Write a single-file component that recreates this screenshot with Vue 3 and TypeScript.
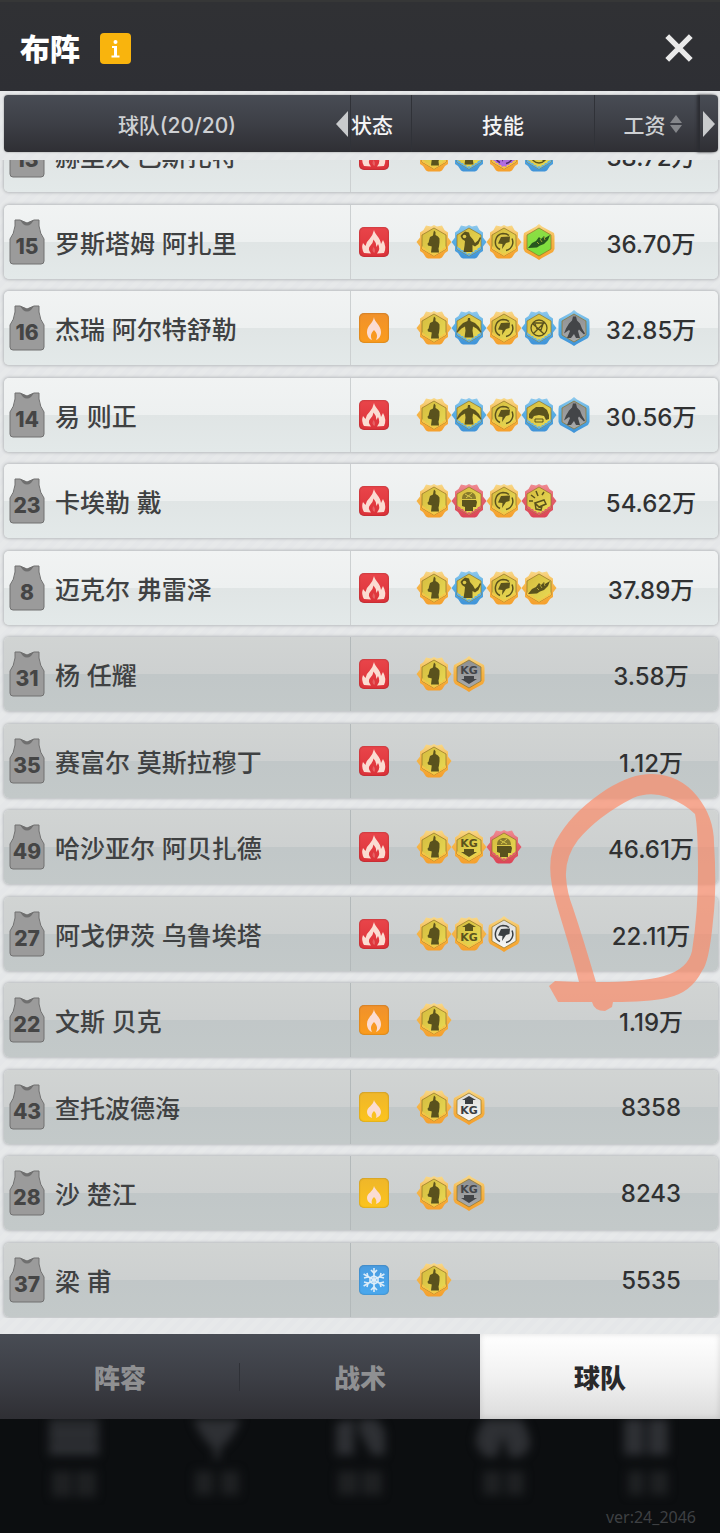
<script setup lang="ts">
type Mood = 'hot' | 'warm' | 'mild' | 'cold'
type Glyph = 'body' | 'throw' | 'bolt' | 'shoe' | 'spread' | 'net' | 'guard' | 'dome' | 'head' | 'whistle' | 'kgdown' | 'kgup'

interface Skill {
  glyph: Glyph
  frame: string
  shape: 'rosette' | 'hex'
  fill: string
}

interface Player {
  no: number
  name: string
  mood: Mood
  skills: Skill[]
  salary: string
  reserve: boolean
}

const skill = (glyph: Glyph, frame = 'gold', shape: Skill['shape'] = 'rosette', fill = 'yellow'): Skill => ({
  glyph,
  frame,
  shape,
  fill,
})

const body = skill('body')
const bolt = skill('bolt')

const players: Player[] = [
  { no: 13, name: '赫里茨 巴斯扎特', mood: 'hot', skills: [body, skill('spread', 'blue'), skill('bolt', 'gold', 'rosette', 'purple'), skill('net', 'blue')], salary: '38.72万', reserve: false },
  { no: 15, name: '罗斯塔姆 阿扎里', mood: 'hot', skills: [body, skill('throw', 'blue'), bolt, skill('shoe', 'gold', 'hex', 'green')], salary: '36.70万', reserve: false },
  { no: 16, name: '杰瑞 阿尔特舒勒', mood: 'warm', skills: [body, skill('spread', 'blue'), bolt, skill('net', 'blue'), skill('guard', 'blue', 'hex', 'gray')], salary: '32.85万', reserve: false },
  { no: 14, name: '易 则正', mood: 'hot', skills: [body, skill('spread', 'blue'), bolt, skill('dome', 'blue'), skill('guard', 'blue', 'hex', 'gray')], salary: '30.56万', reserve: false },
  { no: 23, name: '卡埃勒 戴', mood: 'hot', skills: [body, skill('head', 'red'), bolt, skill('whistle', 'red')], salary: '54.62万', reserve: false },
  { no: 8, name: '迈克尔 弗雷泽', mood: 'hot', skills: [body, skill('throw', 'blue'), bolt, skill('shoe')], salary: '37.89万', reserve: false },
  { no: 31, name: '杨 任耀', mood: 'hot', skills: [body, skill('kgdown', 'gold', 'hex', 'gray')], salary: '3.58万', reserve: true },
  { no: 35, name: '赛富尔 莫斯拉穆丁', mood: 'hot', skills: [body], salary: '1.12万', reserve: true },
  { no: 49, name: '哈沙亚尔 阿贝扎德', mood: 'hot', skills: [body, skill('kgdown'), skill('head', 'red')], salary: '46.61万', reserve: true },
  { no: 27, name: '阿戈伊茨 乌鲁埃塔', mood: 'hot', skills: [body, skill('kgup'), skill('bolt', 'gold', 'hex', 'white')], salary: '22.11万', reserve: true },
  { no: 22, name: '文斯 贝克', mood: 'warm', skills: [body], salary: '1.19万', reserve: true },
  { no: 43, name: '查托波德海', mood: 'mild', skills: [body, skill('kgup', 'gold', 'hex', 'white')], salary: '8358', reserve: true },
  { no: 28, name: '沙 楚江', mood: 'mild', skills: [body, skill('kgdown', 'gold', 'hex', 'gray')], salary: '8243', reserve: true },
  { no: 37, name: '梁 甫', mood: 'cold', skills: [body], salary: '5535', reserve: true },
]

const tabs = ['阵容', '战术', '球队']
const activeTab = '球队'
</script>

<template>
  <div class="page">
    <svg class="defs" width="0" height="0" aria-hidden="true">
      <defs>
        <linearGradient id="frame-gold" x1="0" y1="0" x2="0" y2="1">
          <stop offset="0" stop-color="#f8d98a" /><stop offset=".45" stop-color="#f5b548" /><stop offset="1" stop-color="#f5a02c" />
        </linearGradient>
        <linearGradient id="frame-blue" x1="0" y1="0" x2="0" y2="1">
          <stop offset="0" stop-color="#8fc9ec" /><stop offset=".45" stop-color="#58aee4" /><stop offset="1" stop-color="#3f93d8" />
        </linearGradient>
        <linearGradient id="frame-red" x1="0" y1="0" x2="0" y2="1">
          <stop offset="0" stop-color="#f08d93" /><stop offset=".45" stop-color="#e25f6c" /><stop offset="1" stop-color="#dc4456" />
        </linearGradient>
        <linearGradient id="fill-yellow" x1="0" y1="0" x2="1" y2="1">
          <stop offset="0" stop-color="#d5bb3e" /><stop offset="1" stop-color="#e9dc55" />
        </linearGradient>
        <linearGradient id="fill-gray" x1="0" y1="0" x2="0" y2="1">
          <stop offset="0" stop-color="#8e9092" /><stop offset="1" stop-color="#a9aaab" />
        </linearGradient>
        <linearGradient id="fill-white" x1="0" y1="0" x2="0" y2="1">
          <stop offset="0" stop-color="#dcdcda" /><stop offset="1" stop-color="#f7f7f5" />
        </linearGradient>
        <linearGradient id="fill-green" x1="0" y1="0" x2="0" y2="1">
          <stop offset="0" stop-color="#8fdd45" /><stop offset="1" stop-color="#79e03c" />
        </linearGradient>
        <linearGradient id="fill-purple" x1="0" y1="0" x2="0" y2="1">
          <stop offset="0" stop-color="#a274d0" /><stop offset="1" stop-color="#b56be6" />
        </linearGradient>

        <symbol id="shape-rosette" viewBox="0 0 36 36">
          <path d="M10 1.500 15 2.500 18 1 21 2.500 26 1.500 28.500 6 32 8.500V13.500L35.500 18 32 22.500V27L29 29 26 33.500 24 34.500H12L10 33.500 7 29 4 27V22.500L.5 18 4 13.500V8.500L7.500 6Z" />
        </symbol>
        <symbol id="shape-hex" viewBox="0 0 36 36">
          <path d="M18 0 21 2.500 33 9 33.500 12V25L32 28 21 34 18 36 15 34 4 28 2.500 25V12L3 9 15 2.500Z" />
        </symbol>

        <symbol id="glyph-body" viewBox="0 0 36 36">
          <path d="M18 6.500 19.500 8v3l2.500 1.500 1.500 2v4l-.5 4-.5 2 .5 4h-8l.5-4 .5-4-3.500-1 .5-3 1-3.500 3-1.500.5-3Z" />
          <path d="M11.500 19.500 15 17v3l5-1.500v2.500l-4 1.500-4-1Z" />
        </symbol>
        <symbol id="glyph-throw" viewBox="0 0 36 36">
          <path d="M11 10 14 7.500 18 8.500 19 12 22 15.500 24 19 27 16.500 29 13 30 14 27.500 20 24 22.500 21.500 21 21.500 28H12.500L13.500 22 14 17 11 15 9.500 12Z" />
          <circle cx="13.500" cy="12.500" r="1.800" class="cut" />
        </symbol>
        <symbol id="glyph-spread" viewBox="0 0 36 36">
          <path d="M17 8h2l.5 3 4.500 2 4 4 2.500 5-1 .5-4-4-3.500-2-.5 4 1 7h-9l1-7-.5-4-3.500 2-4 4-1-.5 2.500-5 4-4 4.500-2Z" />
        </symbol>
        <symbol id="glyph-guard" viewBox="0 0 36 36">
          <path d="M17 6.500h3l1 4 3 3 2 5 3 5-1 1-5-5-1 1.500 2 7h-4l-2-4-3 4h-4l3-7-1-1-5 3.500 2-5 3-5 3-3Z" />
        </symbol>
        <symbol id="glyph-bolt" viewBox="0 0 36 36">
          <path d="M14 25.500A8.500 8.500 0 0 1 17 9.500q4 0 6 2M20 26.500A8.500 8.500 0 0 0 26 14.500" fill="none" stroke="currentColor" stroke-width="1.500" />
          <path d="M15 13 24 12.500 23.500 18 20 19 16 25 16.500 20 12 19.500Z" />
        </symbol>
        <symbol id="glyph-shoe" viewBox="0 0 36 36">
          <path d="M7 24 11 19 15 17 18 13 20 15 23 12 24 14 29 11 27 16 23 20 19 21.500 16 23.500Z" />
          <path d="m16 18 2 2m1-5 2 3m2-5 1 3" stroke="#c9b93c" stroke-width=".8" fill="none" />
        </symbol>
        <symbol id="glyph-net" viewBox="0 0 36 36">
          <path d="M26 18A8 8 0 1 1 10 18a8 8 0 0 1 16 0ZM12 13h12M12 24 24 12M12 14l11 10M14 14l2 5 4 1 2-6" fill="none" stroke="currentColor" stroke-width="1.300" />
        </symbol>
        <symbol id="glyph-dome" viewBox="0 0 36 36">
          <path d="M8 21v-4l3-4 4-3h7l4 3 2 5v4l-3 1-2-4-5-1-5 1-2 3Z" />
          <path d="m11 15 1 2m2-4 1 2m3-3v2m4-1-1 2m3 0-1 2M14 22h8v3h-8Z" stroke="currentColor" stroke-width="1" fill="none" />
        </symbol>
        <symbol id="glyph-head" viewBox="0 0 36 36">
          <path d="M11 17h14l1 2-1 5h-3v4h-8v-4l-3-1Z" />
          <path d="M11 16c0-5 3-7 7-7 5 0 7 3 7 7Z" opacity=".65" />
          <path d="m14 11 7 4m0-5-6 5" stroke="#d8c84c" fill="none" />
        </symbol>
        <symbol id="glyph-whistle" viewBox="0 0 36 36">
          <path d="m10 12 4 3m1-7 2 5m6-4-2 3M8 18h4M14 20l9-3 2 4-7 3Zm0 0 1 6 5 1 1-4" fill="none" stroke="currentColor" stroke-width="1.500" />
        </symbol>
        <symbol id="glyph-kgdown" viewBox="0 0 36 36">
          <text x="18" y="18" class="kg">KG</text>
          <path d="M13 20h10v3h3l-8 5-8-5h3Z" />
        </symbol>
        <symbol id="glyph-kgup" viewBox="0 0 36 36">
          <path d="m18 7 7 4h-3v4h-8v-4h-3Z" />
          <text x="18" y="25" class="kg">KG</text>
        </symbol>

        <symbol id="mood-hot" viewBox="0 0 30 30">
          <path d="M15 3C16 8 21 10 22 17L24 13Q28 20 25 26L18 26.500Q22 22 19 17L17.500 20Q17 15 14.500 12.500 14 16 11.500 18.500 8 22 12 26.500L5 26Q2 21 4 16L6.500 19Q7 15 10.500 12 14 8 15 3Z" />
          <path d="M14.500 20Q17 23 15.500 26 12 24 14.500 20Z" opacity=".25" />
        </symbol>
        <symbol id="mood-warm" viewBox="0 0 30 30">
          <path d="M15 4c0 5 7 8 7 15 0 4-2 7-5 8 2-4 1-7-2-10-3 3-4 6-2 10-3-1-5-4-5-8 0-7 6-8 7-15Z" />
        </symbol>
        <symbol id="mood-mild" viewBox="0 0 30 30">
          <path d="M15 8c1 4 7 7 7 12 0 3-2 5-5 6 1-3 0-5-2-7-2 2-3 4-2 7-3-1-5-3-5-6 0-5 6-6 7-12Z" />
        </symbol>
        <symbol id="mood-cold" viewBox="0 0 30 30">
          <g fill="none" stroke="currentColor" stroke-width="1.600">
            <path d="M15 3v24M4.600 9l20.800 12M4.600 21 25.400 9" />
            <path d="m12 5 3 3 3-3M12 25l3-3 3 3M5 13l4-1-1-4M25 17l-4 1 1 4M5 17l4 1-1 4M25 13l-4-1 1-4" />
            <path d="m15 11 4 2v4l-4 2-4-2v-4Z" />
          </g>
        </symbol>
      </defs>
    </svg>

    <header class="topbar">
      <h1>布阵</h1>
      <button class="info" type="button" aria-label="信息">
        <svg viewBox="0 0 31 31" aria-hidden="true">
          <circle cx="15.500" cy="9" r="2" />
          <path d="M12 13H17v9.500h2.500v2H11.500v-2H14v-7.500h-2Z" />
        </svg>
      </button>
      <button class="close" type="button" aria-label="关闭">
        <svg viewBox="0 0 28 28" aria-hidden="true"><path d="m3 3 22 22M25 3 3 25" /></svg>
      </button>
    </header>

    <main class="roster">
      <table>
        <thead>
          <tr>
            <th scope="col" class="team">
              球队(20/20)
              <button class="arrow prev" type="button" aria-label="上一列">
                <svg viewBox="0 0 12 26" aria-hidden="true"><path d="M12 0v26L0 13Z" /></svg>
              </button>
            </th>
            <th scope="col" class="bright state">状态</th>
            <th scope="col" class="bright">技能</th>
            <th scope="col">
              <button class="sort" type="button">
                工资
                <svg viewBox="0 0 12 18" aria-hidden="true"><path d="m6 0 6 8H0ZM0 10h12l-6 8Z" /></svg>
              </button>
              <button class="arrow next" type="button" aria-label="下一列">
                <svg viewBox="0 0 12 26" aria-hidden="true"><path d="M0 0v26l12-13Z" /></svg>
              </button>
            </th>
          </tr>
        </thead>
        <tbody>
          <tr v-for="p in players" :key="p.no" :class="{ reserve: p.reserve }">
            <td class="player">
              <span class="jersey">
                <svg viewBox="0 0 36 46" aria-hidden="true">
                  <path class="shirt" d="M6 1H11L18 4 25 1H30V7Q31 15 35 20V42Q35 45 32 45H4Q1 45 1 42V20Q5 15 6 7Z" />
                  <path class="collar" d="M11 1 14 5Q18 8 22 5L25 1 18 4Z" />
                </svg>
                <span class="no">{{ p.no }}</span>
              </span>
              <span>{{ p.name }}</span>
            </td>
            <td class="status">
              <svg class="mood" :class="p.mood" viewBox="0 0 30 30" aria-hidden="true">
                <use :href="'#mood-' + p.mood" />
              </svg>
            </td>
            <td class="skills">
              <svg v-for="(s, i) in p.skills" :key="i" class="badge" :class="s.fill" viewBox="0 0 36 36" aria-hidden="true">
                <use :href="'#shape-' + s.shape" :fill="`url(#frame-${s.frame})`" />
                <path class="plate" d="m18 4 12 7v14l-12 7-12-7V11Z" :fill="`url(#fill-${s.fill})`" />
                <path v-if="s.shape === 'rosette'" class="rays" :class="s.frame" d="m6 22 2 2 1 0 1 2 2 0 1 2 2 0 1 2 2-1 2 1 1-2 2 0 1-2 2 0 1-2 1 0 2-2v3l-12 7-12-7Z" />
                <use :href="'#glyph-' + s.glyph" />
              </svg>
            </td>
            <td class="salary">{{ p.salary }}</td>
          </tr>
        </tbody>
      </table>
      <svg class="marker" viewBox="0 0 168 238" aria-hidden="true">
        <path
          fill-rule="evenodd"
          d="M31 209C22 172 10 140 4 113Q-2 80 12 61Q27 37 59 16Q85 0 105 1Q132 2 149 23Q166 44 166 70Q169 115 165 148Q161 190 154 198Q143 220 119 225Q100 229 65 229L64 234 57 238Q46 238 44 229H10L1 213 7 208ZM48 209Q94 209 116 203Q140 196 144 178Q150 140 150 98Q150 55 147 41Q137 31 119 24Q102 18 85 25Q50 43 30 67Q17 84 18 104Q19 120 25 135Q35 165 48 209Z"
        />
      </svg>
    </main>

    <nav class="tabs">
      <button v-for="t in tabs" :key="t" type="button" :class="{ active: t === activeTab }">{{ t }}</button>
    </nav>

    <footer class="dock">
      <div class="ghosts" aria-hidden="true">
        <svg viewBox="0 0 60 90"><path d="M5 0h50v36H5Z" /><path class="line" d="M5 8h50M5 22h50" /><path class="cap" d="M8 52h20v26H8ZM32 52h20v26H32Z" /></svg>
        <svg viewBox="0 0 60 90"><path d="M6 0h48Q46 20 33 30v10h-6V30Q14 20 6 0Z" /><path class="cap" d="M8 52h18v24H8ZM34 52h18v24H34Z" /></svg>
        <svg viewBox="0 0 60 90"><path d="M6 4 24 0v36H6ZM29 0h18l8 12v24H42L29 12Z" /><path class="cap" d="M8 52h20v24H8ZM32 52h20v24H32Z" /></svg>
        <svg viewBox="0 0 60 90"><path d="M12 0h36q12 18 8 30l-8 8H36L30 16 24 38H12L4 28Q0 16 12 0Z" /><path class="cap" d="M10 52h18v24H10ZM33 52h18v24H33Z" /></svg>
        <svg viewBox="0 0 60 90"><path d="M8 0h20v36H8ZM32 0h20v36H32Z" /><path class="cap" d="M12 52h16v24H12ZM34 52h18v24H34Z" /></svg>
      </div>
      <span class="version">ver:24_2046</span>
    </footer>
  </div>
</template>

<style>
body {
  margin: 0;
  background: #0c0e10;
}
</style>

<style scoped>
.page {
  display: flex;
  flex-direction: column;
  min-height: 100vh;
  font-family: Inter, "Noto Sans CJK SC", sans-serif;
}

.defs {
  position: absolute;
}

button {
  display: flex;
  align-items: center;
  justify-content: center;
  padding: 0;
  border: 0;
  background: none;
  color: inherit;
  font: inherit;
}

.topbar {
  display: flex;
  align-items: center;
  box-sizing: border-box;
  height: 91px;
  padding: 3px 26px 0 20px;
  border-top: 2px solid #363737;
  background: linear-gradient(#303134, #2e2f34);
}

h1 {
  margin: 0;
  padding-bottom: 2px;
  color: #fff;
  font-family: "Noto Sans CJK SC", sans-serif;
  font-size: 30px;
  font-weight: 900;
  line-height: 40px;
}

.info {
  width: 31px;
  height: 31px;
  margin-left: 20px;
  border-radius: 4px;
  background: #f9b40d;
}

.info svg {
  width: 31px;
  height: 31px;
  fill: #fff;
}

.close {
  margin-left: auto;
}

.close svg {
  width: 30px;
  height: 30px;
  fill: none;
  stroke: #e9e9e9;
  stroke-width: 5;
}

.roster {
  position: relative;
  flex: 1;
  padding: 4px 2px 16px 4px;
  background: repeating-linear-gradient(135deg, #e7e9ea 0 5px, #e5e7e9 5px 10px);
}

table,
thead,
tbody {
  display: block;
}

tr {
  display: grid;
  grid-template-columns: 346fr 61fr 183fr 124fr;
}

thead tr {
  height: 57px;
  margin-bottom: 8px;
  border-radius: 4px;
  background: linear-gradient(#484c54, #3d3f46 50%, #2f2f34);
  box-shadow: 0 0 2px #888;
}

th {
  position: relative;
  display: flex;
  align-items: center;
  justify-content: center;
  padding: 0;
  color: #ced0d3;
  font-size: 21px;
  font-weight: 500;
}

th + th {
  border-left: 1px solid #303238;
}

.bright {
  color: #f4f4f5;
}

.state {
  justify-content: flex-start;
}

.sort {
  flex: 1;
  gap: 4px;
  padding-left: 10px;
}

.sort svg {
  width: 12px;
  height: 18px;
  fill: #85878b;
}

.arrow svg {
  width: 12px;
  height: 26px;
  fill: #c9cbcd;
}

.prev {
  position: absolute;
  right: 2px;
}

.next {
  align-self: stretch;
  width: 18px;
  border-radius: 0 4px 4px 0;
  box-shadow: -3px 0 3px #2c2d32;
}

tbody {
  overflow: hidden;
  margin: 0 -2px 0 -4px;
  padding: 0 2px 1px 4px;
}

tbody tr {
  height: 74px;
  margin-bottom: 12px;
  border-radius: 5px;
  background: linear-gradient(#f1f3f3, #edf0f0 50%, #e0e5e5 50%, #e3e9e9);
  box-shadow: 0 0 3px 1px #b9bcbe;
}

tbody tr:nth-child(odd) {
  margin-bottom: 13px;
}

tbody tr:first-child {
  margin-top: -42px;
}

tbody tr:last-child {
  margin-bottom: 0;
}

tbody tr.reserve {
  background: linear-gradient(#d1d4d3, #cdd0d0 50%, #c1c7c8 50%, #c3c9c9);
}

td {
  display: flex;
  align-items: center;
  padding: 0;
}

.player {
  gap: 10px;
  padding-left: 5px;
  color: #3f4142;
  font-size: 25px;
  font-weight: 500;
  white-space: nowrap;
}

.jersey {
  display: grid;
  width: 36px;
}

.jersey > * {
  grid-area: 1 / 1;
}

.jersey svg {
  width: 36px;
  height: 46px;
}

.shirt {
  fill: #9b9b9b;
  stroke: #707070;
  stroke-width: 1;
}

.collar {
  fill: #6f6f6f;
}

.no {
  align-self: end;
  padding-bottom: 4px;
  color: #454545;
  font-size: 21px;
  font-weight: 800;
  line-height: 28px;
  text-align: center;
}

.status {
  padding-left: 8px;
  border-left: 1px solid #ccd0d1;
}

.reserve .status {
  border-color: #b3b9ba;
}

.mood {
  width: 30px;
  height: 30px;
  border-radius: 5px;
  color: #fbdcd2;
  fill: currentColor;
  box-shadow: inset 0 0 2px #0005;
}

.hot {
  background: linear-gradient(#e9454a, #dc3239);
}

.warm {
  background: linear-gradient(#f0912b, #fb9c1c);
}

.mild {
  background: linear-gradient(#efb62a, #fcc41d);
}

.cold {
  background: linear-gradient(#4a9ce0, #4aa8ee);
  color: #dcecf8;
}

.skills {
  padding-left: 5px;
}

.badge {
  flex: none;
  width: 36px;
  height: 36px;
  margin-right: -1px;
  color: #5a521d;
  fill: currentColor;
}

.plate {
  stroke: #8d7427;
  stroke-width: 1;
  stroke-opacity: 0.7;
}

.rays.gold {
  fill: #f6c545;
}

.rays.blue {
  fill: #66b3dc;
}

.rays.red {
  fill: #e0606a;
}

.gray {
  color: #434548;
}

.white {
  color: #3b3f42;
}

.green {
  color: #27571e;
}

.purple {
  color: #4a2868;
}

.cut {
  fill: #ddc94a;
}

.kg {
  font-family: "DejaVu Sans", sans-serif;
  font-size: 11px;
  font-weight: 700;
  text-anchor: middle;
}

.salary {
  justify-content: center;
  padding-right: 10px;
  color: #303132;
  font-size: 24px;
  font-weight: 500;
}

.marker {
  position: absolute;
  top: 682px;
  right: 4px;
  width: 168px;
  height: 238px;
  fill: #ff8560;
  opacity: 0.64;
  pointer-events: none;
}

.tabs {
  display: grid;
  grid-template-columns: repeat(3, 1fr);
  height: 85px;
  background: linear-gradient(#484c54, #3d3f46 50%, #2f2f34);
}

.tabs button {
  color: #8f9092;
  font-family: "Noto Sans CJK SC", sans-serif;
  font-size: 26px;
  font-weight: 900;
}

.tabs button:first-child {
  background: linear-gradient(#2f3137, #2f3137) right center / 1px 28px no-repeat;
}

.tabs .active {
  background: linear-gradient(#fff, #f1f1f1 50%, #dcdcdc);
  box-shadow: inset 0 0 6px #0002;
  color: #29292b;
}

.dock {
  display: flex;
  flex-direction: column;
  height: 114px;
  overflow: hidden;
  background: #0c0e10;
}

.ghosts {
  display: grid;
  grid-template-columns: repeat(5, 1fr);
  justify-items: center;
  height: 86px;
  overflow: hidden;
  padding: 0 3px;
}

.ghosts svg {
  width: 60px;
  height: 90px;
  fill: #2e3034;
  filter: blur(5px);
}

.ghosts .cap {
  fill: #1f2123;
}

.ghosts .line {
  stroke: #1d1f22;
  stroke-width: 3;
}

.version {
  align-self: flex-end;
  padding-right: 24px;
  color: #3e4043;
  font-family: "Noto Sans", sans-serif;
  font-size: 16px;
  line-height: 24px;
}
</style>
